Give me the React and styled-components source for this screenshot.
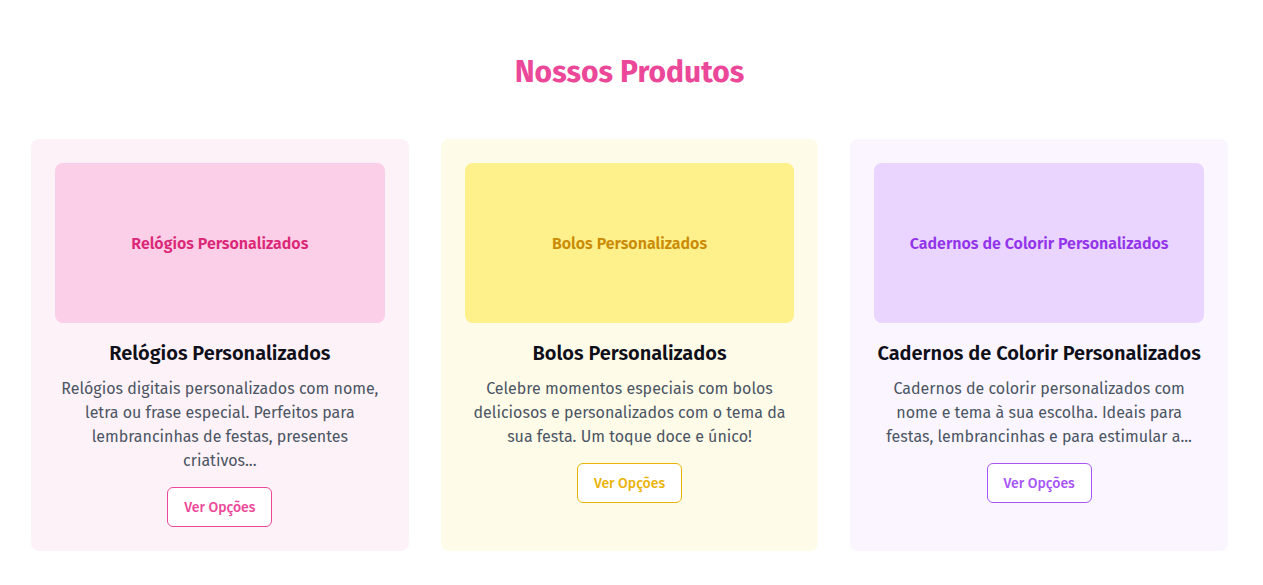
import React from "react";
import styled, { createGlobalStyle } from "styled-components";

const GlobalStyle = createGlobalStyle`
  * { box-sizing: border-box; }
  body {
    margin: 0;
    background: #ffffff;
    font-family: "Fira Sans", "Noto Sans", "Open Sans", sans-serif;
  }
`;

const Section = styled.section`
  padding: 54px 35px 32px 31px;
`;

const Heading = styled.h2`
  margin: 0 0 49px;
  text-align: center;
  font-size: 30px;
  line-height: 36px;
  font-weight: 700;
  color: #ec4899;
`;

const Grid = styled.div`
  display: grid;
  grid-template-columns: repeat(3, 1fr);
  gap: 32px;
`;

const Card = styled.div`
  background: ${({ $bg }) => $bg};
  border-radius: 8px;
  padding: 24px;
  display: flex;
  flex-direction: column;
  align-items: center;
  text-align: center;
`;

const Picture = styled.div`
  width: 100%;
  height: 160px;
  border-radius: 8px;
  background: ${({ $bg }) => $bg};
  color: ${({ $fg }) => $fg};
  display: flex;
  align-items: center;
  justify-content: center;
  font-size: 16px;
  font-weight: 600;
`;

const Title = styled.h3`
  margin: 16px 0 10px;
  font-size: 20px;
  line-height: 28px;
  font-weight: 600;
  color: #0f0f1a;
`;

const Text = styled.p`
  margin: 0 0 14px;
  font-size: 16px;
  line-height: 24px;
  color: #4b5563;
`;

const Button = styled.button`
  font-family: inherit;
  font-size: 14px;
  font-weight: 500;
  height: 40px;
  padding: 0 16px;
  background: #ffffff;
  color: ${({ $c }) => $c};
  border: 1px solid ${({ $c }) => $c};
  border-radius: 6px;
  cursor: pointer;
`;

const products = [
  {
    name: "Relógios Personalizados",
    text: "Relógios digitais personalizados com nome, letra ou frase especial. Perfeitos para lembrancinhas de festas, presentes criativos...",
    card: "#fdf2f8",
    pic: "#fbcfe8",
    fg: "#db2777",
    btn: "#ec4899",
  },
  {
    name: "Bolos Personalizados",
    text: "Celebre momentos especiais com bolos deliciosos e personalizados com o tema da sua festa. Um toque doce e único!",
    card: "#fefbe8",
    pic: "#fef08a",
    fg: "#ca8a04",
    btn: "#eab308",
  },
  {
    name: "Cadernos de Colorir Personalizados",
    text: "Cadernos de colorir personalizados com nome e tema à sua escolha. Ideais para festas, lembrancinhas e para estimular a...",
    card: "#faf5ff",
    pic: "#e9d5ff",
    fg: "#9333ea",
    btn: "#a855f7",
  },
];

export default function App() {
  return (
    <>
      <GlobalStyle />
      <Section>
        <Heading>Nossos Produtos</Heading>
        <Grid>
          {products.map((p) => (
            <Card key={p.name} $bg={p.card}>
              <Picture $bg={p.pic} $fg={p.fg}>
                {p.name}
              </Picture>
              <Title>{p.name}</Title>
              <Text>{p.text}</Text>
              <Button $c={p.btn}>Ver Opções</Button>
            </Card>
          ))}
        </Grid>
      </Section>
    </>
  );
}
